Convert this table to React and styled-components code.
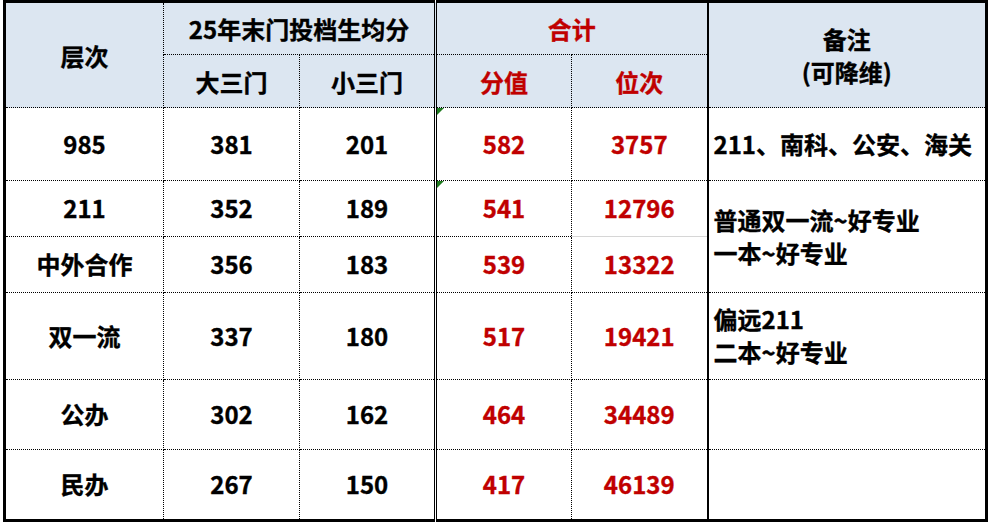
import React from 'react';
import styled, { createGlobalStyle } from 'styled-components';

const GlobalStyle = createGlobalStyle`
  html, body {
    margin: 0;
    padding: 0;
    background: #fff;
  }
  body {
    font-family: "Noto Sans CJK SC", "Microsoft YaHei", "Noto Sans", sans-serif;
  }
`;

const Page = styled.div`
  width: 990px;
  height: 522px;
  padding: 0 0 0 3px;
  box-sizing: border-box;
  overflow: hidden;
`;

const Sheet = styled.table`
  border-collapse: collapse;
  table-layout: fixed;
  width: 985px;
  border: 3px solid #000;
  font-weight: 700;
  font-size: 24px;
  color: #000;
  -webkit-text-stroke: 0.35px currentColor;
`;

const edge = {
  double: '3px double #000',
  thick: '2px solid #000',
};

const HeadCell = styled.th`
  background: #dce6f1;
  border: 1px dotted #000;
  border-right: ${p => (p.$right ? edge[p.$right] : '1px dotted #000')};
  color: ${p => (p.$red ? '#c00000' : '#000')};
  font-size: 24px;
  font-weight: 700;
  text-align: center;
  vertical-align: middle;
  line-height: 33px;
  padding: 0;
`;

const Cell = styled.td`
  position: relative;
  border: 1px dotted #000;
  border-right: ${p => (p.$right ? edge[p.$right] : '1px dotted #000')};
  ${p => p.$softTop && 'border-top: 1px solid #d6d6d6;'}
  color: ${p => (p.$red ? '#c00000' : '#000')};
  text-align: center;
  vertical-align: middle;
  padding: 0 0 2px;
  white-space: nowrap;
`;

const Note = styled.td`
  border: 1px dotted #000;
  border-left: 2px solid #000;
  text-align: left;
  vertical-align: middle;
  padding: 0 0 2px 5px;
  line-height: 33px;
  white-space: nowrap;
`;

const Row = styled.tr`
  height: ${p => p.$h}px;
`;

const Flag = styled.span`
  position: absolute;
  top: 0;
  left: 0;
  width: 0;
  height: 0;
  border-top: 7px solid #1f7a1f;
  border-right: 7px solid transparent;
`;

const rows = [
  { level: '985', big: 381, small: 201, score: 582, rank: 3757, h: 73, flag: true, note: ['211、南科、公安、海关'], span: 1 },
  { level: '211', big: 352, small: 189, score: 541, rank: 12796, h: 56, flag: true, note: ['普通双一流~好专业', '一本~好专业'], span: 2 },
  { level: '中外合作', big: 356, small: 183, score: 539, rank: 13322, h: 56, soft: true },
  { level: '双一流', big: 337, small: 180, score: 517, rank: 19421, h: 87, note: ['偏远211', '二本~好专业'], span: 1 },
  { level: '公办', big: 302, small: 162, score: 464, rank: 34489, h: 70, note: [], span: 1 },
  { level: '民办', big: 267, small: 150, score: 417, rank: 46139, h: 71, note: [], span: 1 },
];

export default function App() {
  return (
    <Page>
      <GlobalStyle />
      <Sheet>
        <colgroup>
          <col style={{ width: 159 }} />
          <col style={{ width: 136 }} />
          <col style={{ width: 136 }} />
          <col style={{ width: 136 }} />
          <col style={{ width: 136 }} />
          <col />
        </colgroup>
        <thead>
          <Row $h={53}>
            <HeadCell rowSpan={2}>层次</HeadCell>
            <HeadCell colSpan={2} $right="double">25年末门投档生均分</HeadCell>
            <HeadCell colSpan={2} $red $right="thick">合计</HeadCell>
            <HeadCell rowSpan={2}>备注<br />(可降维)</HeadCell>
          </Row>
          <Row $h={53}>
            <HeadCell>大三门</HeadCell>
            <HeadCell $right="double">小三门</HeadCell>
            <HeadCell $red>分值</HeadCell>
            <HeadCell $red $right="thick">位次</HeadCell>
          </Row>
        </thead>
        <tbody>
          {rows.map(r => (
            <Row key={r.level} $h={r.h}>
              <Cell>{r.level}</Cell>
              <Cell>{r.big}</Cell>
              <Cell $right="double">{r.small}</Cell>
              <Cell $red>
                {r.flag && <Flag />}
                {r.score}
              </Cell>
              <Cell $red $right="thick" $softTop={r.soft}>{r.rank}</Cell>
              {r.note && (
                <Note rowSpan={r.span}>
                  {r.note.map((line, i) => (
                    <div key={i}>{line}</div>
                  ))}
                </Note>
              )}
            </Row>
          ))}
        </tbody>
      </Sheet>
    </Page>
  );
}
